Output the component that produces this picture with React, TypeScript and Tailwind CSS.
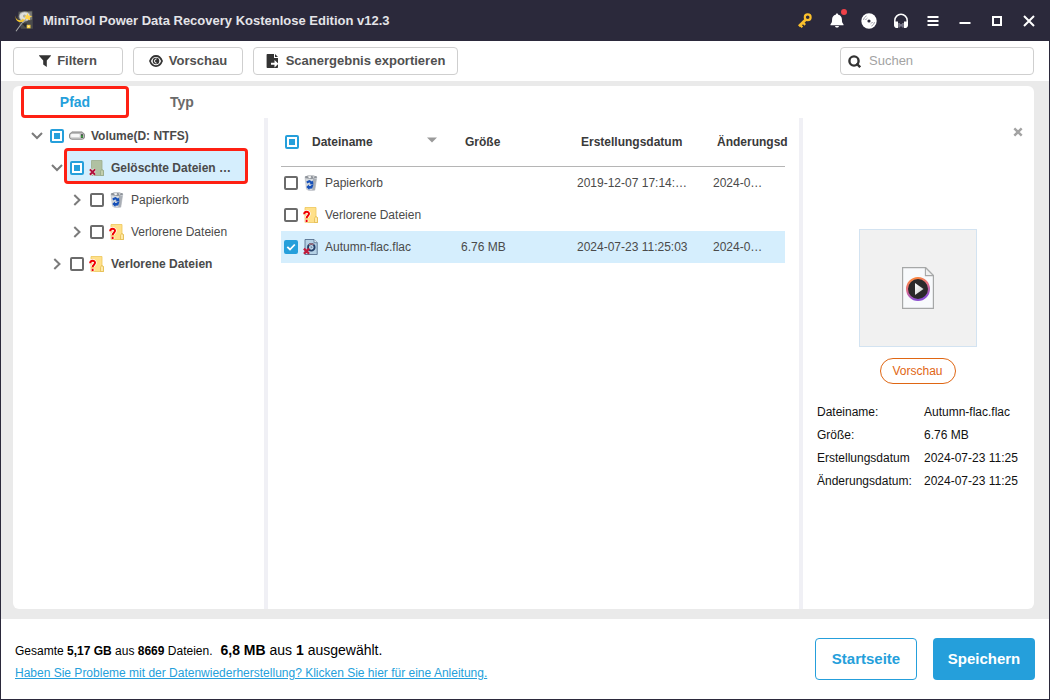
import { useEffect, useRef, useState, type ReactNode } from "react";

type CheckState = "on" | "off" | "mixed";

function Check({ label, initial }: { label: string; initial: CheckState }) {
  const [state, setState] = useState<CheckState>(initial);
  const ref = useRef<HTMLInputElement>(null);
  useEffect(() => {
    if (ref.current) ref.current.indeterminate = state === "mixed";
  }, [state]);
  return (
    <span className="grid size-3.5 shrink-0 place-items-center">
      <input
        ref={ref}
        type="checkbox"
        aria-label={label}
        checked={state === "on"}
        onChange={() => setState(state === "on" ? "off" : "on")}
        className="col-start-1 row-start-1 size-3.5 appearance-none rounded-xs border-2 border-[#6b6b6b] bg-white checked:border-[#259fdb] checked:bg-[#259fdb] indeterminate:border-[#259fdb]"
      />
      {state === "mixed" && <span className="pointer-events-none col-start-1 row-start-1 size-1.5 bg-[#259fdb]" />}
      {state === "on" && (
        <svg viewBox="0 0 14 14" className="pointer-events-none col-start-1 row-start-1 size-3.5" fill="none" stroke="#fff" strokeWidth="1.8">
          <path d="M3.3 6.8 6 9.5l4.8-5" />
        </svg>
      )}
    </span>
  );
}

function Chevron({ open }: { open: boolean }) {
  return (
    <svg viewBox="0 0 12 12" className="size-3" fill="none" stroke="#7b7b7b" strokeWidth="2">
      {open ? <path d="M1 3 6 8l5-5" /> : <path d="M3.3 1 8.5 6l-5.2 5" />}
    </svg>
  );
}

function DriveIcon() {
  return (
    <svg viewBox="0 0 16 16" className="size-4 shrink-0">
      <path d="M3 3.500h10L15.500 8H.5z" fill="#e9e9e9" stroke="#a9a9a9" strokeWidth=".7" />
      <rect x=".5" y="4.800" width="15" height="6.400" rx="2.4" fill="#d6d6d6" stroke="#777" strokeWidth=".9" />
      <rect x="2" y="6" width="8.700" height="3" rx="1" fill="#f8f8f8" />
      <path d="M11.800 6.200h2.400v3.800h-2.400z" fill="#444" />
      <path d="M12.300 7.400h1.400v2h-1.400z" fill="#35c63b" />
    </svg>
  );
}

function DeletedFolderIcon() {
  return (
    <svg viewBox="0 0 16 16" className="size-4 shrink-0">
      <path d="M2.500.5h10.500v9l1.500 1v5h-12z" fill="#b0c1a2" stroke="#9cac8c" strokeWidth=".8" />
      <path d="M11.500 15.5v-4l1-2 2 1.2v4.8z" fill="#c3cfae" stroke="#94a585" strokeWidth=".7" />
      <path d="m.9 9.4 5.2 5.4M6.1 9.4.9 14.8" stroke="#e8eee4" strokeWidth="3.2" />
      <path d="m.9 9.400 5.200 5.400M6.100 9.400.9 14.800" stroke="#b2123c" strokeWidth="2" />
    </svg>
  );
}

function LostFolderIcon() {
  return (
    <svg viewBox="0 0 16 16" className="size-4 shrink-0">
      <path d="M2 .5h11v9l1.500 1v5H2z" fill="#ffe089" stroke="#edc75a" strokeWidth=".8" />
      <path d="M11.500 15.5v-4l1-2 2 1.2v4.8z" fill="#ffe9a8" stroke="#e0b646" strokeWidth=".7" />
      <path d="M1.200 7.300c0-3.400 4.800-3.200 4.800-.5 0 1.900-2.400 2-2.400 4.200M3.600 12.800v2.400" stroke="#fff" strokeWidth="3.400" fill="none" />
      <path d="M1.200 7.300c0-3.400 4.800-3.200 4.800-.5 0 1.900-2.400 2-2.400 4.400M3.600 12.800v2.200" stroke="#f00000" strokeWidth="2" fill="none" />
    </svg>
  );
}

function BinIcon() {
  return (
    <svg viewBox="0 0 16 16" className="size-4 shrink-0">
      <path d="M2 2.200h11.800l-2 13-5.500.5-2.800-1.500z" fill="#d6dade" stroke="#b5b9bf" strokeWidth=".6" />
      <path d="M10 4h3.400l-1.600 11-2.500.3z" fill="#a9aeb5" />
      <path d="M1.800 1.600 5 .5h5.400l3.600 1-.4 1.600-4.800.8-6.300-.7z" fill="#8e939a" />
      <path d="m4.500 1.600 3-.5.8 1.300-2 .8zM9.500 1.200l2.500.5-1.700 1z" fill="#f7f7f7" />
      <path d="m3.300 6.500 3-1.500 2.700 1.500 1-1 .4 4-4-.3 1.200-1.200-1.400-.6-2 1.100z" fill="#1650b8" />
      <path d="m10.400 9.800-1.200 3.700-2.900.3v1.200L3.300 12l2.500-2.600.2 1.600 2-.3.500-1z" fill="#1650b8" />
    </svg>
  );
}

function DeletedMediaIcon() {
  return (
    <svg viewBox="0 0 16 16" className="size-4 shrink-0">
      <path d="M2 .5h9l3.200 3.200v11.800H2z" fill="#b5d1e5" stroke="#57718e" strokeWidth=".9" />
      <path d="M11 .5v3.200h3.200" fill="#e4eff7" stroke="#57718e" strokeWidth=".8" />
      <circle cx="8.300" cy="8.300" r="3.300" fill="#c6ddec" stroke="#24406a" strokeWidth="1.900" />
      <path d="M5.900 6a3.400 3.400 0 0 1 4.600-.2" stroke="#b87a80" strokeWidth="1.200" fill="none" />
      <path d="m7.600 6.800 2.200 1.500-2.200 1.400z" fill="#6e8bab" />
      <path d="m.9 9.600 5.200 5.200M6.100 9.600.9 14.800" stroke="#c11c3c" strokeWidth="2.200" />
    </svg>
  );
}

function AppLogo() {
  return (
    <svg viewBox="0 0 20 22" className="h-[22px] w-5 shrink-0">
      <path d="M3.500 1.500 17.500.8l.4 18H6L2.500 8z" fill="#4b4c4d" />
      <path d="m4.500 2.200 12.300-.7.4 8-12 2.600z" fill="#777876" />
      <ellipse cx="9.700" cy="6.500" rx="5.400" ry="4.600" fill="#dfe0dc" stroke="#a9aba9" strokeWidth=".8" />
      <circle cx="9.500" cy="6" r="1.500" fill="#a5a7a5" />
      <path d="M.3 5.500c.4 4 3 5.600 7 4.500l-.5-1.500 3.500 1.800-3 2.800-.1-1.400C3 13 .3 10 .3 5.500z" fill="#f4c52c" />
      <path d="m12.200 3 1.500 2.700 3.800.2-2.800 1.700.5 3-3-1.900-3 1.200 1.600-2.400-1.700-1.800 2.600-.1z" fill="#ffd44a" />
      <path d="M11 9.500 6.200 14 1 21.300" stroke="#a4a6a6" strokeWidth="1.100" fill="none" />
      <path d="M7 13.500h5l-1.500 4z" fill="#292a2e" />
      <rect x="11.800" y="14.800" width="3.700" height="3.500" fill="#f6cd42" />
      <rect x="12.800" y="15.800" width="1.600" height="1.400" fill="#fff1aa" />
    </svg>
  );
}

function MediaFileIcon() {
  return (
    <svg viewBox="0 0 32 42" className="h-[42px] w-8">
      <defs>
        <linearGradient id="ring" x1="0" y1="0" x2=".3" y2="1">
          <stop offset="0" stopColor="#ff8a2d" />
          <stop offset=".5" stopColor="#e5708a" />
          <stop offset="1" stopColor="#8c4fd0" />
        </linearGradient>
        <linearGradient id="play" x1="0" y1="0" x2="1" y2="1">
          <stop offset="0" stopColor="#fff" />
          <stop offset="1" stopColor="#c9c9c9" />
        </linearGradient>
      </defs>
      <path d="M.6.6h23l7.800 8v32.800H.6z" fill="#f8fafc" stroke="#a6a8a8" strokeWidth="1.200" />
      <path d="M23.400.6v8h8z" fill="#f1f1f1" stroke="#a6a8a8" strokeWidth="1.100" />
      <circle cx="16" cy="22" r="11" fill="#2b292a" stroke="url(#ring)" strokeWidth="2" />
      <path d="m13 16 8.500 6L13 28z" fill="url(#play)" />
    </svg>
  );
}

function KeyIcon() {
  return (
    <svg viewBox="0 0 14 15" className="h-[15px] w-3.5" fill="none" stroke="#fbc02d">
      <circle cx="9.700" cy="4.300" r="2.900" strokeWidth="2.200" />
      <path d="M7.600 6.800 1 13.300" strokeWidth="2.800" />
      <path d="m4.800 9.500 2.400 2.400M2.200 12l2.200 2.200" strokeWidth="2.200" />
    </svg>
  );
}

function BellIcon() {
  return (
    <svg viewBox="0 0 14 15" className="h-[15px] w-3.5" fill="#fff">
      <path d="M7 .5c.8 0 1.200.5 1.200 1.200 2.500.5 3.700 2.400 3.700 4.600 0 3.100.5 3.700 1.600 4.900v1.100H.5v-1.100c1.100-1.200 1.600-1.800 1.600-4.900 0-2.200 1.200-4.100 3.700-4.600C5.800 1 6.200.5 7 .5z" />
      <path d="M5 13h4c-.3 1.100-1 1.600-2 1.600S5.300 14.100 5 13z" />
    </svg>
  );
}

function DiscIcon() {
  return (
    <svg viewBox="0 0 16 16" className="size-4">
      <circle cx="8" cy="8" r="7.700" fill="#fff" />
      <circle cx="8" cy="8" r="1.600" fill="#2b293b" />
      <path d="M2.600 6.700a5.600 5.600 0 0 1 3.300-3.900M4.700 7a3.500 3.500 0 0 1 1.700-2M13.400 9.300a5.600 5.600 0 0 1-3.300 3.900M11.300 9a3.500 3.500 0 0 1-1.700 2" fill="none" stroke="#5d5b6c" strokeWidth=".8" strokeDasharray="1.600 .7" />
    </svg>
  );
}

function HeadsetIcon() {
  return (
    <svg viewBox="0 0 16 16" className="size-4">
      <path d="M1.800 10V7.500a6.200 6.200 0 0 1 12.400 0V10" fill="none" stroke="#fff" strokeWidth="1.500" />
      <path d="M1 8.500h4V15H3C1.600 14.400 1 13.200 1 12zM15 8.500h-4V15h2c1.400-.600 2-1.800 2-3z" fill="#fff" />
      <path d="M6 10v4.500M10 10v4.500" stroke="#b9b8c3" strokeWidth="1" />
      <path d="M6.500 12.300h3" stroke="#77758a" strokeWidth="2.500" />
    </svg>
  );
}

const titleActions: { label: string; icon: ReactNode; badge?: boolean }[] = [
  { label: "Lizenz", icon: <KeyIcon /> },
  { label: "Benachrichtigungen", icon: <BellIcon />, badge: true },
  { label: "Bootfähiges Medium", icon: <DiscIcon /> },
  { label: "Support", icon: <HeadsetIcon /> },
  {
    label: "Menü",
    icon: (
      <svg viewBox="0 0 12 12" className="size-3" stroke="#fff" strokeWidth="2">
        <path d="M.5 2h11M.5 6h11M.5 10h11" />
      </svg>
    ),
  },
  {
    label: "Minimieren",
    icon: (
      <svg viewBox="0 0 12 12" className="size-3" stroke="#fff" strokeWidth="2">
        <path d="M.5 8h11" />
      </svg>
    ),
  },
  {
    label: "Maximieren",
    icon: (
      <svg viewBox="0 0 12 12" className="size-3" fill="none" stroke="#fff" strokeWidth="2">
        <rect x="2" y="2" width="8" height="8" />
      </svg>
    ),
  },
  {
    label: "Fenster schließen",
    icon: (
      <svg viewBox="0 0 12 12" className="size-3" stroke="#fff" strokeWidth="2">
        <path d="m1 1 10 10M11 1 1 11" />
      </svg>
    ),
  },
];

function ToolButton({ icon, children, width }: { icon: ReactNode; children: ReactNode; width: string }) {
  return (
    <button type="button" className={`flex h-7 items-center justify-center gap-1.5 rounded-sm border border-[#cfcfcf] bg-white text-[13px] font-bold text-[#505050] ${width}`}>
      {icon}
      {children}
    </button>
  );
}

type Node = { name: string; icon: ReactNode; indent: string; open: boolean; state: CheckState; bold: boolean; level: number; marked?: boolean };

const tree: Node[] = [
  { name: "Volume(D: NTFS)", icon: <DriveIcon />, indent: "pl-[18px]", open: true, state: "mixed", bold: true, level: 1 },
  { name: "Gelöschte Dateien …", icon: <DeletedFolderIcon />, indent: "pl-[38px]", open: true, state: "mixed", bold: true, level: 2, marked: true },
  { name: "Papierkorb", icon: <BinIcon />, indent: "pl-[58px]", open: false, state: "off", bold: false, level: 3 },
  { name: "Verlorene Dateien", icon: <LostFolderIcon />, indent: "pl-[58px]", open: false, state: "off", bold: false, level: 3 },
  { name: "Verlorene Dateien", icon: <LostFolderIcon />, indent: "pl-[38px]", open: false, state: "off", bold: true, level: 2 },
];

const files: { name: string; icon: ReactNode; size: string; created: string; modified: string; state: CheckState }[] = [
  { name: "Papierkorb", icon: <BinIcon />, size: "", created: "2019-12-07 17:14:…", modified: "2024-0…", state: "off" },
  { name: "Verlorene Dateien", icon: <LostFolderIcon />, size: "", created: "", modified: "", state: "off" },
  { name: "Autumn-flac.flac", icon: <DeletedMediaIcon />, size: "6.76 MB", created: "2024-07-23 11:25:03", modified: "2024-0…", state: "on" },
];

const details = [
  ["Dateiname:", "Autumn-flac.flac"],
  ["Größe:", "6.76 MB"],
  ["Erstellungsdatum", "2024-07-23 11:25"],
  ["Änderungsdatum:", "2024-07-23 11:25"],
];

export default function App() {
  return (
    <div className="flex min-h-screen flex-col border-x border-b border-[#2b293b] bg-white font-['Liberation_Sans',Arial,sans-serif] text-[12px] text-[#4a4a4a]">
      <header className="flex h-[41px] shrink-0 items-center justify-between bg-[#2b293b] pr-1 pl-3.5">
        <div className="flex items-center gap-2">
          <AppLogo />
          <h1 className="text-[13px] font-bold text-[#e4e4e8]">MiniTool Power Data Recovery Kostenlose Edition v12.3</h1>
        </div>
        <div className="flex">
          {titleActions.map((a) => (
            <button key={a.label} type="button" aria-label={a.label} className="relative flex size-8 items-center justify-center">
              {a.icon}
              {a.badge && <span className="absolute top-1 right-1.5 size-1.5 rounded-full bg-[#f04149]" />}
            </button>
          ))}
        </div>
      </header>

      <div className="flex h-10 shrink-0 items-center gap-2.5 pr-[15px] pl-3">
        <ToolButton
          width="w-[110px]"
          icon={
            <svg viewBox="0 0 12 12" className="size-3" fill="#333">
              <path d="M.5.300h11c.500 0 .600.400.300.800L7.800 5.500V12L4.200 9.600V5.500L.200 1.100C-.100.700 0 .300.500.300z" />
            </svg>
          }
        >
          Filtern
        </ToolButton>
        <ToolButton
          width="w-[110px]"
          icon={
            <svg viewBox="0 0 14 12" className="h-3 w-3.5" fill="none">
              <path d="M1 6c2.400-6.700 9.600-6.700 12 0-2.400 6.700-9.600 6.700-12 0z" stroke="#333" strokeWidth="1.800" />
              <circle cx="7" cy="6" r="3.300" fill="#333" />
              <path d="M7.600 3.900a2.100 2.100 0 0 0 0 4.200" stroke="#fff" strokeWidth="1" />
            </svg>
          }
        >
          Vorschau
        </ToolButton>
        <ToolButton
          width="w-[205px]"
          icon={
            <svg viewBox="0 0 14 14" className="size-3.5">
              <path d="M1.300 0H8v4h4v9.300c0 .400-.300.700-.700.700H1.300c-.400 0-.700-.300-.700-.700V.700C.600.300.900 0 1.300 0z" fill="#333" />
              <path d="m9 0 3 3H9z" fill="#333" />
              <path d="M5 8.800h3.500V6L12.500 9.800l-4 3.700v-2.700H5z" fill="#fff" />
            </svg>
          }
        >
          Scanergebnis exportieren
        </ToolButton>
        <label className="ml-auto flex h-7 w-[194px] items-center gap-2 rounded-sm border border-[#cfcfcf] px-[7px]">
          <svg viewBox="0 0 13 13" className="size-[13px] shrink-0" fill="none" stroke="#333" strokeWidth="2.400">
            <circle cx="6" cy="6" r="4.600" />
            <path d="m8.500 8.500 3.700 3.700" />
          </svg>
          <input type="search" aria-label="Suchen" placeholder="Suchen" className="w-full min-w-0 bg-transparent text-[13px] outline-none placeholder:text-[#a3a3a3]" />
        </label>
      </div>

      <div className="flex flex-1 bg-[#eaeaea] pt-[5px] pr-[15px] pb-2.5 pl-3">
        <main className="flex min-w-0 flex-1 flex-col rounded-md bg-white">
          <div role="tablist" className="flex h-8 shrink-0 items-center px-2 text-[14px] font-bold">
            <button type="button" role="tab" aria-selected="true" className="h-8 w-[108px] rounded-sm border-3 border-[#fe2013] text-[#259fdb]">
              Pfad
            </button>
            <button type="button" role="tab" aria-selected="false" className="h-8 w-[106px] text-[#6a6a6a]">
              Typ
            </button>
          </div>

          <div className="flex min-h-0 flex-1">
            <ul role="tree" aria-label="Pfad" className="w-[251px] shrink-0 pt-0.5">
              {tree.map((n, i) => (
                <li key={i} role="treeitem" aria-level={n.level} aria-expanded={n.open} aria-selected={!!n.marked} className={`flex h-8 items-center pr-4 ${n.indent}`}>
                  <button type="button" aria-label={n.open ? "Zuklappen" : "Aufklappen"} className="mr-px shrink-0">
                    <Chevron open={n.open} />
                  </button>
                  <div
                    className={`-mt-1 flex h-9 min-w-0 flex-1 items-center gap-[5px] rounded-sm border-3 pt-1 pl-[3px] ${n.marked ? "border-[#fe2013] bg-[#d5eefd]" : "border-transparent"}`}
                  >
                    <Check label={n.name} initial={n.state} />
                    {n.icon}
                    <span className={`ml-px whitespace-nowrap ${n.bold ? "font-bold" : ""}`}>{n.name}</span>
                  </div>
                </li>
              ))}
            </ul>

            <section className="min-w-0 flex-1 border-x-4 border-[#f0f0f5] pr-3.5 pl-[13px]">
              <table className="w-full table-fixed border-collapse text-left">
                <colgroup>
                  <col className="w-[176px]" />
                  <col className="w-[116px]" />
                  <col className="w-[136px]" />
                  <col />
                </colgroup>
                <thead>
                  <tr className="h-12 border-b border-[#b5b5b5] text-[#3a3a3a]">
                    <th className="pl-1">
                      <div className="flex items-center">
                        <Check label="Alle auswählen" initial="mixed" />
                        <span className="ml-[13px] flex-1">Dateiname</span>
                        <svg viewBox="0 0 10 6" className="mr-5 mb-1 h-1.5 w-2.5" fill="#9a9a9a">
                          <path d="M0 .500h10L5 5.500z" />
                        </svg>
                      </div>
                    </th>
                    <th className="pl-2">Größe</th>
                    <th className="pl-2">Erstellungsdatum</th>
                    <th className="pl-2 whitespace-nowrap">Änderungsd</th>
                  </tr>
                </thead>
                <tbody>
                  <tr aria-hidden="true" className="h-px" />
                  {files.map((f) => (
                    <tr key={f.name} className={f.state === "on" ? "h-8 bg-[#d5eefd]" : "h-8"}>
                      <td className="pl-[3px]">
                        <div className="flex items-center">
                          <Check label={f.name} initial={f.state} />
                          <span className="mr-1.5 ml-[5px]">{f.icon}</span>
                          {f.name}
                        </div>
                      </td>
                      <td className="pl-1">{f.size}</td>
                      <td className="pl-1 whitespace-nowrap">{f.created}</td>
                      <td className="pl-1 whitespace-nowrap">{f.modified}</td>
                    </tr>
                  ))}
                </tbody>
              </table>
            </section>

            <aside className="flex w-[231px] shrink-0 flex-col items-center pr-0.5">
              <button type="button" aria-label="Vorschau schließen" className="mt-[5px] mr-[5px] self-end p-1">
                <svg viewBox="0 0 10 10" className="size-2.5" stroke="#a3a3a3" strokeWidth="2.400">
                  <path d="m1.300 1.300 7.400 7.400M8.700 1.300 1.300 8.700" />
                </svg>
              </button>
              <div className="mt-[88px] grid size-[118px] place-items-center border border-[#d3e3f1] bg-[#f1f1f1]">
                <MediaFileIcon />
              </div>
              <button type="button" className="mt-[11px] h-[26px] w-[76px] rounded-full border border-[#df6613] text-[12px] text-[#df6613]">
                Vorschau
              </button>
              <dl className="mt-[17px] grid w-full grid-cols-[107px_1fr] pl-3.5 leading-[23px] text-[#111]">
                {details.map(([k, v]) => (
                  <div key={k} className="contents">
                    <dt className="whitespace-nowrap">{k}</dt>
                    <dd className="whitespace-nowrap">{v}</dd>
                  </div>
                ))}
              </dl>
            </aside>
          </div>
        </main>
      </div>

      <footer className="flex h-20 shrink-0 items-center justify-between px-3.5">
        <div className="pt-1 text-black">
          <p className="leading-[22px]">
            Gesamte <b>5,17 GB</b> aus <b>8669</b> Dateien.
            <span className="ml-2 text-[14px]">
              <b>6,8 MB</b> aus <b>1</b> ausgewählt.
            </span>
          </p>
          <a href="#anleitung" className="leading-[22px] text-[#259fdb] underline">
            Haben Sie Probleme mit der Datenwiederherstellung? Klicken Sie hier für eine Anleitung.
          </a>
        </div>
        <div className="flex gap-4 text-[15px] font-bold">
          <button type="button" className="h-[42px] w-[102px] rounded-sm border border-[#259fdb] bg-white text-[#259fdb]">
            Startseite
          </button>
          <button type="button" className="h-[42px] w-[102px] rounded-sm bg-[#259fdb] text-white">
            Speichern
          </button>
        </div>
      </footer>
    </div>
  );
}
